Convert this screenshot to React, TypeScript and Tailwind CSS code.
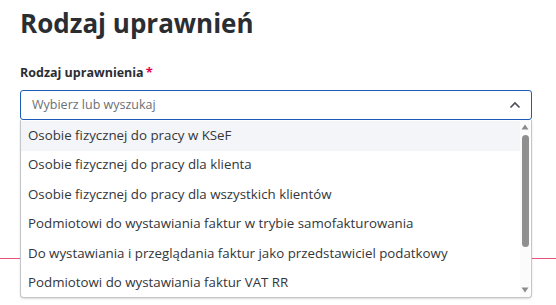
import React from "react";

const items = [
  "Osobie fizycznej do pracy w KSeF",
  "Osobie fizycznej do pracy dla klienta",
  "Osobie fizycznej do pracy dla wszystkich klientów",
  "Podmiotowi do wystawiania faktur w trybie samofakturowania",
  "Do wystawiania i przeglądania faktur jako przedstawiciel podatkowy",
  "Podmiotowi do wystawiania faktur VAT RR",
];

export default function App() {
  return (
    <div
      className="w-[556px] h-[305px] bg-white overflow-hidden relative"
      style={{ fontFamily: '"Open Sans", "Noto Sans", sans-serif' }}
    >
      <div className="px-5 pt-[4px]">
        <h1 className="text-[26px] leading-[38px] font-bold text-[#2a2e33]">Rodzaj uprawnień</h1>
        <div className="mt-[20px] text-[12.5px] leading-[20px] font-bold text-[#2a2e33]">
          Rodzaj uprawnienia<span className="text-[#e5004f] ml-[2px] text-[13px]">*</span>
        </div>
        <div className="relative mt-[7px] w-[512px]">
          <div className="h-[30px] border border-[#1c5bb8] rounded-[3px] flex items-center pl-[11px] pr-[8px]">
            <span className="flex-1 text-[12.5px] text-[#6b6f75]">Wybierz lub wyszukaj</span>
            <svg width="12" height="8" viewBox="0 0 12 8" className="mr-[2px]">
              <path d="M1.5 6.5 L6 2 L10.5 6.5" fill="none" stroke="#4a4e55" strokeWidth="1.6" />
            </svg>
          </div>
          <div className="absolute left-0 top-[30px] w-[512px] h-[178px] bg-white border border-[#c4c6ca] border-t-0 rounded-b-[4px] shadow-[0_1px_2px_rgba(0,0,0,0.15)] flex z-10">
            <div className="flex-1 pt-[1px]">
              {items.map((t, i) => (
                <div
                  key={t}
                  className={`h-[29.5px] flex items-center pl-[7px] text-[13.3px] text-[#33363a] ${i === 0 ? "bg-[#f4f5f9]" : ""}`}
                >
                  {t}
                </div>
              ))}
            </div>
            <div className="w-[10px] mr-[1px] flex flex-col items-center bg-[#fbfbfb]">
              <svg width="8" height="6" viewBox="0 0 8 6" className="mt-[4px]">
                <path d="M4 0.5 L7.5 5.5 L0.5 5.5 Z" fill="#8c8c8c" />
              </svg>
              <div className="mt-[5px] w-[7px] h-[112px] rounded-full bg-[#8f8f8f]" />
              <div className="flex-1" />
              <svg width="8" height="6" viewBox="0 0 8 6" className="mb-[4px]">
                <path d="M0.5 0.5 L7.5 0.5 L4 5.5 Z" fill="#8c8c8c" />
              </svg>
            </div>
          </div>
        </div>
      </div>
      <div className="absolute left-0 top-[258px] w-[556px] h-px bg-[#e8537a]" />
    </div>
  );
}
